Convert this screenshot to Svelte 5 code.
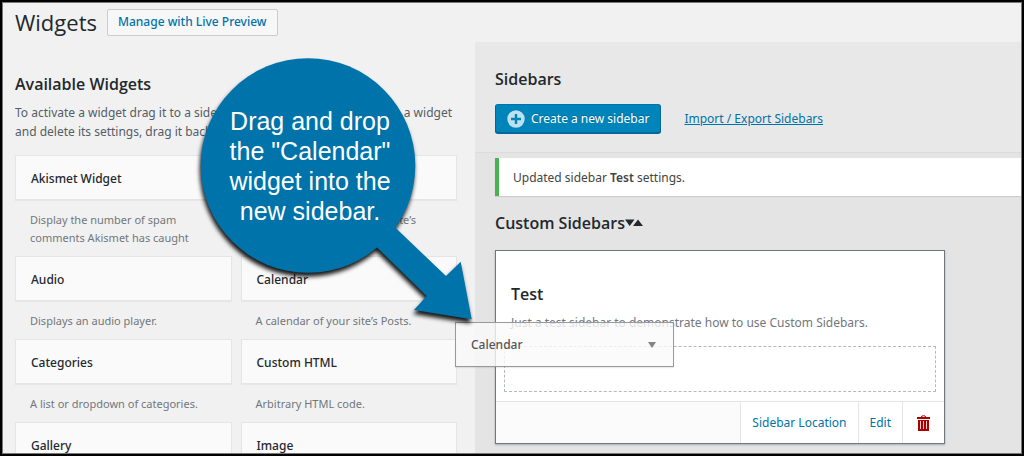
<script>
  const widgets = [
    { name: 'Akismet Widget', about: 'Display the number of spam comments Akismet has caught' },
    { name: 'Archives', about: 'A monthly archive of your site’s Posts.' },
    { name: 'Audio', about: 'Displays an audio player.' },
    { name: 'Calendar', about: 'A calendar of your site’s Posts.' },
    { name: 'Categories', about: 'A list or dropdown of categories.' },
    { name: 'Custom HTML', about: 'Arbitrary HTML code.' },
    { name: 'Gallery', about: 'Displays an image gallery.' },
    { name: 'Image', about: 'Displays an image.' }
  ];
</script>

<div class="page">
  <header>
    <h1>Widgets</h1>
    <button type="button" class="preview">Manage with Live Preview</button>
  </header>

  <div class="columns">
    <section class="available">
      <h2>Available Widgets</h2>
      <p class="intro">
        <span class="line"><span>To activate a widget drag it to a sidebar or click on it. To deactivate</span> <span>a widget</span></span>
        and delete its settings, drag it back.
      </p>
      <div class="list">
        {#each widgets as w}
          <article>
            <h3>{w.name}</h3>
            <p>{w.about}</p>
          </article>
        {/each}
      </div>
    </section>

    <section class="sidebars">
      <div class="top">
        <h2>Sidebars</h2>
        <div class="actions">
          <button type="button" class="create">
            <svg width="18" height="18" viewBox="0 0 18 18" aria-hidden="true">
              <circle cx="9" cy="9" r="8.7" fill="#bfe0ef" />
              <path d="M9 4v10M4 9h10" stroke="#0085ba" stroke-width="2.4" />
            </svg>
            Create a new sidebar
          </button>
          <a href="#import">Import / Export Sidebars</a>
        </div>
      </div>

      <div class="body">
        <div class="notice">Updated sidebar <strong>Test</strong> settings.</div>
        <div class="group">
          <h2>Custom Sidebars</h2>
          <button type="button" class="sort" aria-label="Sort sidebars">
            <svg width="18" height="8" viewBox="0 0 18 8" aria-hidden="true">
              <path d="M0 .5h9.500L4.700 7zM8 7h10L13 .5z" fill="#23282d" />
              <path d="M11.2 0L7 5.600" stroke="#e4e4e4" stroke-width=".8" />
            </svg>
          </button>
        </div>

        <div class="card">
          <div class="info">
            <h3>Test</h3>
            <p>Just a test sidebar to demonstrate how to use Custom Sidebars.</p>
          </div>
          <div class="drop"></div>
          <footer>
            <a href="#location">Sidebar Location</a>
            <a href="#edit">Edit</a>
            <button type="button" class="trash" aria-label="Delete">
              <svg width="13" height="16" viewBox="0 0 13 16" aria-hidden="true">
                <path d="M4.2 2.2Q4.4.7 6.5.7t2.3 1.500" fill="none" stroke="#a00" stroke-width="1" />
                <path d="M0 2h13v2H0z" fill="#a00" />
                <path d="M1 5h11v11H1z" fill="#a00" />
                <path d="M3.500 6v8M6.500 6v8M9.500 6v8" stroke="#f3cccc" stroke-width="1" />
              </svg>
            </button>
          </footer>
        </div>
      </div>
    </section>
  </div>

  <div class="dragged">
    <span>Calendar</span>
    <svg width="8" height="6" viewBox="0 0 8 6" aria-hidden="true"><path d="M0 0h8L4 6z" fill="#82868a" /></svg>
  </div>

  <div class="callout">
    <svg width="290" height="280" viewBox="195 50 290 280" aria-hidden="true">
      <g fill="#0073aa">
        <circle cx="308" cy="165.500" r="107.300" />
        <path d="M350 184L396 228.300 446 276 460.700 261.700 471.700 319.300 414 310 426.700 296 377.300 247.700 330 205z" />
      </g>
    </svg>
    <p>Drag and drop<br />the "Calendar"<br />widget into the<br />new sidebar.</p>
  </div>
</div>

<style>
  :global(body) { margin: 0; background: #f1f1f1; }
  .page, .page * { box-sizing: border-box; }
  .page {
    position: relative;
    height: 100vh;
    overflow: hidden;
    border: 2px solid #000;
    background: #f1f1f1;
    color: #23282d;
    font-family: "Segoe UI", "Noto Sans", sans-serif;
    font-size: 12px;
    line-height: 18px;
  }
  .page::after {
    content: "";
    position: absolute;
    inset: 0;
    border: 1px solid #777;
    pointer-events: none;
  }
  h1, h2, h3, p { margin: 0; }
  button { font: inherit; cursor: pointer; }
  a { color: #0073aa; }
  h1, h2, .info h3 { font-family: "Segoe UI", "Open Sans", sans-serif; }
  h2 { font-size: 16px; font-weight: 600; line-height: 24px; }

  header { display: flex; align-items: center; gap: 10px; height: 40px; padding-left: 13px; }
  h1 { font-size: 22px; font-weight: 400; line-height: 30px; }
  .preview {
    height: 27px;
    padding: 0 10px;
    border: 1px solid #ccc;
    border-radius: 2px;
    background: #f7f7f7;
    color: #0073aa;
    font-weight: 500;
    white-space: nowrap;
  }

  .columns { display: grid; grid-template-columns: 473fr 547fr; }
  .available { min-width: 0; padding: 30px 18px 0 13px; }
  .intro { padding: 7px 5px 0 0; color: #555d66; line-height: 19px; white-space: nowrap; }
  .line { display: flex; justify-content: space-between; }
  .list { display: grid; grid-template-columns: 1fr 1fr; column-gap: 9px; padding-top: 14px; }
  .list h3 {
    height: 45px;
    padding: 0 15px;
    border: 1px solid #e5e5e5;
    background: #fafafa;
    box-shadow: 0 1px 1px rgba(0, 0, 0, .04);
    font-size: 12px;
    font-weight: 500;
    line-height: 45px;
  }
  .list p { padding: 11px 15px 9px; color: #72777c; font-size: 11px; }

  .sidebars { background: #e4e4e4; min-height: 414px; }
  .top { height: 111px; padding: 25px 20px 0; background: #e8e8e8; border-bottom: 1px solid #dcdcdc; }
  .actions { display: flex; align-items: center; gap: 23px; padding-top: 13px; }
  .create {
    display: flex;
    align-items: center;
    gap: 6px;
    height: 29px;
    padding: 0 11px;
    border: 1px solid #006799;
    border-color: #0073aa #006799 #006799;
    border-radius: 3px;
    background: #0085ba;
    box-shadow: 0 1px 0 #006799;
    color: #fff;
    text-shadow: 0 -1px 1px #006799;
    white-space: nowrap;
  }
  .body { padding: 5px 0 0 20px; }
  .notice {
    padding: 11px 14px 9px;
    border-left: 4px solid #46b450;
    background: #fff;
    box-shadow: 0 1px 1px rgba(0, 0, 0, .1);
    color: #444;
  }
  .notice strong { font-weight: 600; }
  .group { display: flex; align-items: center; padding: 15px 0; }
  .sort { display: flex; padding: 0; border: 0; background: none; }

  .card {
    max-width: 450px;
    border: 1px solid #72777c;
    background: #fff;
    box-shadow: 0 1px 2px rgba(0, 0, 0, .25);
  }
  .info { padding: 31px 15px 0; }
  .info h3 { font-size: 16px; font-weight: 600; line-height: 24px; }
  .info p { padding-top: 8px; color: #72777c; white-space: nowrap; }
  .drop { height: 46px; margin: 14px 8px 9px; border: 1px dashed #b4b9be; }
  footer { display: flex; justify-content: flex-end; height: 42px; border-top: 1px solid #e5e5e5; background: #fbfbfb; }
  footer a, .trash {
    display: flex;
    align-items: center;
    padding: 0 11px;
    border: 0;
    border-left: 1px solid #e5e5e5;
    background: #fff;
    text-decoration: none;
  }
  .trash { padding: 0 14px; }

  .dragged {
    position: absolute;
    left: 453px;
    top: 320px;
    display: flex;
    align-items: center;
    justify-content: space-between;
    width: 219px;
    height: 45px;
    padding: 0 17px 0 15px;
    border: 1px solid #999;
    background: rgba(250, 250, 250, .8);
    box-shadow: 0 1px 1px rgba(0, 0, 0, .08);
    color: #555;
    font-weight: 500;
  }
  .callout { position: absolute; left: 193px; top: 48px; width: 290px; }
  .callout svg { display: block; filter: drop-shadow(-1px 4px 2px rgba(0, 0, 0, .9)); }
  .callout p {
    position: absolute;
    top: 56px;
    left: 0;
    width: 230px;
    color: #fff;
    font-family: "Liberation Sans", Arial, sans-serif;
    font-size: 25px;
    line-height: 30px;
    text-align: center;
  }
</style>
